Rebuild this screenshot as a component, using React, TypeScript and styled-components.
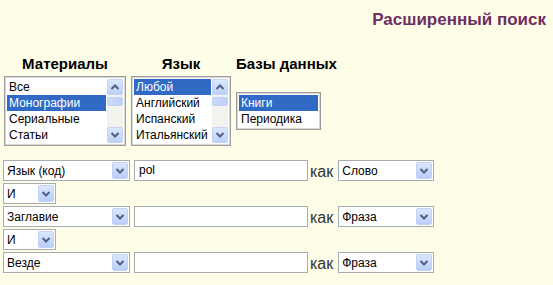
import React from "react";
import styled, { createGlobalStyle } from "styled-components";

const GlobalStyle = createGlobalStyle`
  html, body { margin: 0; padding: 0; background: #fefde8; }
  body { font-family: "Liberation Sans", Arial, sans-serif; }
`;

const Page = styled.div`
  min-height: 100vh;
  background: #fefde8;
  padding-top: 10px;
  box-sizing: border-box;
`;

const Title = styled.h1`
  margin: 0;
  text-align: right;
  padding-right: 7px;
  font-size: 17px;
  line-height: 20px;
  font-weight: bold;
  color: #6f2e62;
`;

const FacetGrid = styled.div`
  display: grid;
  grid-template-columns: auto auto auto;
  justify-content: start;
  column-gap: 5px;
  row-gap: 4px;
  margin: 25px 0 0 4px;
`;

const FacetHeader = styled.div`
  font-size: 15px;
  font-weight: bold;
  line-height: 17px;
  color: #000;
  justify-self: center;
`;

const ListBox = styled.div<{ $w: number; $rows: number }>`
  width: ${(p) => p.$w}px;
  height: ${(p) => p.$rows * 16 + 6}px;
  box-sizing: border-box;
  border: 1px solid #9c9c9c;
  box-shadow: inset 0 0 0 1px #d8d8d8;
  padding: 2px;
  background: #fff;
  display: flex;
  align-self: center;
  justify-self: start;
`;

const Items = styled.div`
  flex: 1;
  min-width: 0;
`;

const Item = styled.div<{ $sel?: boolean }>`
  height: 16px;
  line-height: 16px;
  font-size: 12px;
  padding-left: 2px;
  white-space: nowrap;
  overflow: hidden;
  color: ${(p) => (p.$sel ? "#fff" : "#000")};
  background: ${(p) => (p.$sel ? "#316ac5" : "transparent")};
`;

const ScrollBar = styled.div`
  width: 16px;
  margin-left: 1px;
  display: flex;
  flex-direction: column;
  background: #f3f3ee;
`;

const ScrollBtn = styled.div`
  width: 16px;
  height: 16px;
  box-sizing: border-box;
  border-radius: 2px;
  background: linear-gradient(#dce7fd, #bcd0f8);
  border: 1px solid #c6d4f2;
  display: flex;
  align-items: center;
  justify-content: center;
`;

const Thumb = styled.div`
  width: 16px;
  height: 9px;
  margin-top: 2px;
  box-sizing: border-box;
  border-radius: 2px;
  background: linear-gradient(90deg, #cfdcfb, #bccff7);
  border: 1px solid #c2d2f4;
`;

const Spacer = styled.div`
  flex: 1;
`;

const Chevron = ({ up }: { up?: boolean }) => (
  <svg width="10" height="8" viewBox="0 0 10 8">
    <path
      d={up ? "M1.5 6 L5 2.5 L8.5 6" : "M1.5 2 L5 5.5 L8.5 2"}
      fill="none"
      stroke="#4d6185"
      strokeWidth="2"
    />
  </svg>
);

const List = ({
  items,
  sel,
  w,
  scroll,
}: {
  items: string[];
  sel: number;
  w: number;
  scroll?: boolean;
}) => (
  <ListBox $w={w} $rows={items.length}>
    <Items>
      {items.map((t, i) => (
        <Item key={t} $sel={i === sel}>
          {t}
        </Item>
      ))}
    </Items>
    {scroll && (
      <ScrollBar>
        <ScrollBtn>
          <Chevron up />
        </ScrollBtn>
        <Thumb />
        <Spacer />
        <ScrollBtn>
          <Chevron />
        </ScrollBtn>
      </ScrollBar>
    )}
  </ListBox>
);

const SearchForm = styled.div`
  display: flex;
  flex-direction: column;
  gap: 2px;
  margin: 14px 0 0 3px;
`;

const Row = styled.div`
  display: flex;
  align-items: center;
  height: 21px;
`;

const SelectBox = styled.div<{ $w: number }>`
  width: ${(p) => p.$w}px;
  height: 21px;
  box-sizing: border-box;
  border: 1px solid #a5acb2;
  background: #fff;
  display: flex;
  align-items: center;
  padding: 1px;
`;

const SelectText = styled.div`
  flex: 1;
  font-size: 12px;
  padding-left: 2px;
  color: #000;
  white-space: nowrap;
`;

const SelectBtn = styled.div`
  width: 16px;
  height: 17px;
  box-sizing: border-box;
  border-radius: 2px;
  background: linear-gradient(#dce7fd, #b9cef8);
  border: 1px solid #c3d3f5;
  display: flex;
  align-items: center;
  justify-content: center;
`;

const Select = ({ w, value }: { w: number; value: string }) => (
  <SelectBox $w={w}>
    <SelectText>{value}</SelectText>
    <SelectBtn>
      <Chevron />
    </SelectBtn>
  </SelectBox>
);

const TextInput = styled.div`
  width: 174px;
  height: 21px;
  box-sizing: border-box;
  border: 1px solid #a5acb2;
  background: #fff;
  margin-left: 4px;
  font-size: 12px;
  line-height: 19px;
  padding-left: 4px;
  color: #000;
`;

const Kak = styled.span`
  font-size: 16px;
  color: #333;
  margin: 0 5px 0 2px;
  position: relative;
  top: 1px;
`;

const QueryRow = ({ field, text, mode }: { field: string; text: string; mode: string }) => (
  <Row>
    <Select w={127} value={field} />
    <TextInput>{text}</TextInput>
    <Kak>как</Kak>
    <Select w={96} value={mode} />
  </Row>
);

export default function App() {
  return (
    <>
      <GlobalStyle />
      <Page>
        <Title>Расширенный поиск</Title>
        <FacetGrid>
          <FacetHeader>Материалы</FacetHeader>
          <FacetHeader>Язык</FacetHeader>
          <FacetHeader>Базы данных</FacetHeader>
          <List items={["Все", "Монографии", "Сериальные", "Статьи"]} sel={1} w={122} scroll />
          <List items={["Любой", "Английский", "Испанский", "Итальянский"]} sel={0} w={100} scroll />
          <List items={["Книги", "Периодика"]} sel={0} w={85} />
        </FacetGrid>
        <SearchForm>
          <QueryRow field="Язык (код)" text="pol" mode="Слово" />
          <Row>
            <Select w={53} value="И" />
          </Row>
          <QueryRow field="Заглавие" text="" mode="Фраза" />
          <Row>
            <Select w={53} value="И" />
          </Row>
          <QueryRow field="Везде" text="" mode="Фраза" />
        </SearchForm>
      </Page>
    </>
  );
}
